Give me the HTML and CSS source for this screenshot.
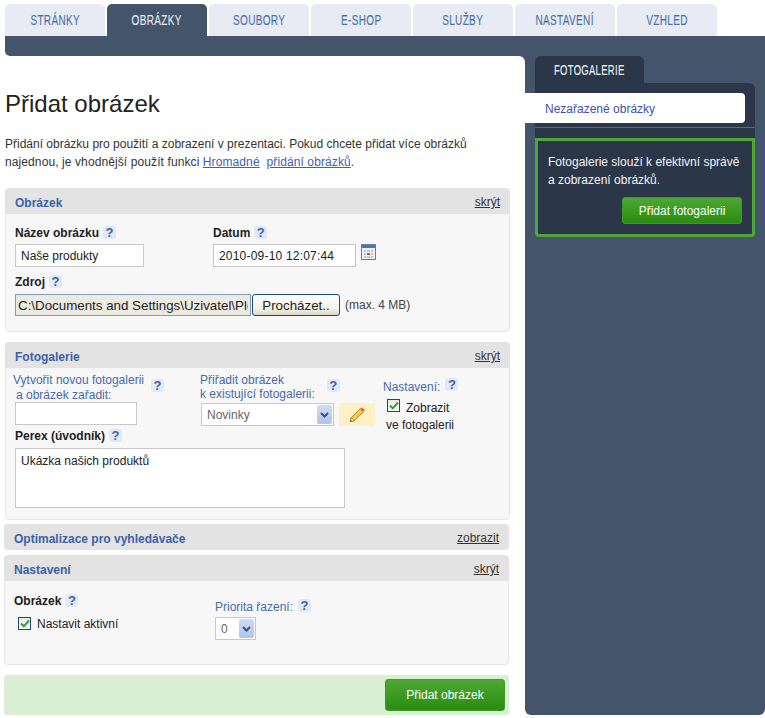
FILE: index.html
```html
<!DOCTYPE html>
<html lang="cs">
<head>
<meta charset="utf-8">
<title>Přidat obrázek</title>
<link rel="stylesheet" href="styles.css">
</head>
<body>
<nav class="tabs">
  <a class="tab"><span>STRÁNKY</span></a>
  <a class="tab active"><span>OBRÁZKY</span></a>
  <a class="tab"><span>SOUBORY</span></a>
  <a class="tab"><span>E-SHOP</span></a>
  <a class="tab"><span>SLUŽBY</span></a>
  <a class="tab"><span>NASTAVENÍ</span></a>
  <a class="tab"><span>VZHLED</span></a>
</nav>
<div class="bar"></div>
<div class="layout">
  <main class="main">
    <h1>Přidat obrázek</h1>
    <p class="intro">Přidání obrázku pro použití a zobrazení v prezentaci. Pokud chcete přidat více obrázků <span class="intro-second">najednou, je vhodnější použít funkci <a href="#">Hromadné</a>&nbsp; <a href="#">přidání obrázků</a>.</span></p>

    <section class="box">
      <header class="box-head"><h2>Obrázek</h2><a href="#" class="toggle">skrýt</a></header>
      <div class="box-body image-body">
        <div class="row">
          <div class="name-col">
            <div class="bold-label">Název obrázku<span class="help">?</span></div>
            <input class="field name-input" type="text" value="Naše produkty">
          </div>
          <div>
            <div class="bold-label">Datum<span class="help">?</span></div>
            <div class="date-row">
              <input class="field date-input" type="text" value="2010-09-10 12:07:44">
              <svg class="calendar" width="15" height="16" viewBox="0 0 15 16">
                <rect x=".5" y=".5" width="14" height="15" fill="#eef1f7" stroke="#5d7fb5"/>
                <rect x="1" y="1" width="13" height="3" fill="#4f74ad"/>
                <rect x="3" y="6" width="9" height="8" fill="#c4c4c4"/>
                <path d="M3 8.500h9M3 11.500h9M5.500 6v8M9.500 6v8" stroke="#f2f2f2"/>
                <rect x="6" y="9" width="3" height="2" fill="#c0503c"/>
              </svg>
            </div>
          </div>
        </div>
        <div class="bold-label source-label">Zdroj<span class="help">?</span></div>
        <div class="file-row">
          <input class="file-path" type="text" readonly value="C:\Documents and Settings\Uzivatel\Plocha\produkty.jpg">
          <button class="browse" type="button">Procházet..</button>
          <span class="limit">(max. 4 MB)</span>
        </div>
      </div>
    </section>

    <section class="box box-gallery">
      <header class="box-head"><h2>Fotogalerie</h2><a href="#" class="toggle">skrýt</a></header>
      <div class="box-body gallery-body">
        <div class="gallery-row">
          <div class="col-new">
            <div class="label-line">
              <div class="blue-label"><span class="first">Vytvořit novou fotogalerii</span><span class="second">a obrázek zařadit:</span></div>
              <span class="help help-new">?</span>
            </div>
            <input class="field new-input" type="text">
          </div>
          <div class="col-assign">
            <div class="label-line">
              <div class="blue-label tight">Přiřadit obrázek<br>k existující fotogalerii:</div>
              <span class="help help-assign">?</span>
            </div>
            <div class="select-row">
              <div class="select select-wide">
                <span class="select-value">Novinky</span>
                <span class="select-arrow"><svg width="9" height="6" viewBox="0 0 9 6"><path d="M1 1l3.500 3.500L8 1" fill="none" stroke="#3f5378" stroke-width="2"/></svg></span>
              </div>
              <span class="pencil">
                <svg width="16" height="16" viewBox="0 0 18 18">
                  <path d="M1.500 16.500l1-4.500L12.500 2l3.500 3.500L6 15.500z" fill="#f6c84c" stroke="#a8701f" stroke-width=".9" stroke-linejoin="round"/>
                  <path d="M12.500 2L14 .8a1 1 0 0 1 1.300 0l2 2a1 1 0 0 1 0 1.300L16 5.500z" fill="#e0703a"/>
                  <path d="M1.500 16.500l1-4.500L6 15.500z" fill="#f5dfb5" stroke="#a8701f" stroke-width=".7"/>
                  <path d="M1.500 16.500l.4-1.800 1.400 1.400z" fill="#333"/>
                </svg>
              </span>
            </div>
          </div>
          <div class="col-settings">
            <div class="settings-title"><span class="blue-text">Nastavení:</span><span class="help help-settings">?</span></div>
            <div class="check-line">
              <span class="check"><svg width="10" height="9" viewBox="0 0 10 9"><path d="M1 4.500l2.800 2.800L9 1.500" fill="none" stroke="#2ba02b" stroke-width="2"/></svg></span>
              <span class="check-text">Zobrazit</span>
            </div>
            <div class="check-second">ve fotogalerii</div>
          </div>
        </div>
        <div class="bold-label perex-label">Perex (úvodník)<span class="help">?</span></div>
        <textarea class="field perex" rows="3">Ukázka našich produktů</textarea>
      </div>
    </section>

    <section class="box box-shifted box-seo">
      <header class="box-head"><h2>Optimalizace pro vyhledávače</h2><a href="#" class="toggle">zobrazit</a></header>
    </section>

    <section class="box box-shifted box-settings">
      <header class="box-head"><h2>Nastavení</h2><a href="#" class="toggle">skrýt</a></header>
      <div class="box-body settings-body">
        <div class="settings-left">
          <div class="bold-label">Obrázek<span class="help">?</span></div>
          <div class="check-line active-line">
            <span class="check"><svg width="10" height="9" viewBox="0 0 10 9"><path d="M1 4.500l2.800 2.800L9 1.500" fill="none" stroke="#2ba02b" stroke-width="2"/></svg></span>
            <span class="active-text">Nastavit aktivní</span>
          </div>
        </div>
        <div class="priority">
          <div class="priority-label"><span class="blue-text">Priorita řazení:</span><span class="help">?</span></div>
          <div class="select select-small">
            <span class="select-value">0</span>
            <span class="select-arrow"><svg width="9" height="6" viewBox="0 0 9 6"><path d="M1 1l3.500 3.500L8 1" fill="none" stroke="#3f5378" stroke-width="2"/></svg></span>
          </div>
        </div>
      </div>
    </section>

    <div class="submit-bar"><button class="green-btn submit-btn" type="button">Přidat obrázek</button></div>
  </main>

  <aside class="side">
    <div class="side-tab"><span>FOTOGALERIE</span></div>
    <div class="side-panel">
      <a class="side-item">Nezařazené obrázky</a>
      <div class="side-rule"></div>
    </div>
    <div class="side-info">
      <p>Fotogalerie slouží k efektivní správě a&nbsp;zobrazení obrázků.</p>
      <button class="green-btn side-btn" type="button">Přidat fotogalerii</button>
    </div>
  </aside>
</div>
</body>
</html>
```

FILE: styles.css
```css
* { box-sizing: border-box; }

html, body { margin: 0; padding: 0; background: #fff; }

body {
  font: 12px/18px "Liberation Sans", Arial, sans-serif;
  color: #333;
  height: 718px;
  overflow: hidden;
}

a { color: #3f62ad; }

/* top navigation */
.tabs {
  display: flex;
  gap: 2px;
  padding: 4px 0 0 5px;
}

.tab {
  width: 100px;
  height: 32px;
  text-align: center;
  background: #e8ebf3;
  color: #4a70a8;
  border-radius: 5px 5px 0 0;
  font: 15px/32px "Liberation Sans", sans-serif;
  letter-spacing: .5px;
}

.tab span,
.side-tab span {
  display: inline-block;
  transform: scaleX(.667);
  -webkit-text-stroke: .12px currentColor;
}

.tab.active {
  background: #44546b;
  color: #e6ebf2;
}

.bar {
  height: 20px;
  margin-left: 5px;
  background: #44546b;
  border-bottom-left-radius: 5px;
}

/* page columns */
.layout {
  display: flex;
  margin-left: 5px;
  height: 659px;
  background: linear-gradient(#44546b, #44546b) 514px 0 / 6px 6px no-repeat;
}

.main {
  width: 520px;
  background: #fff;
  border-top-right-radius: 6px;
}

h1 {
  margin: 33px 0 16px;
  font-size: 24px;
  line-height: 30px;
  font-weight: normal;
  color: #222;
}

.intro {
  margin: 0 40px 17px 0;
  color: #333;
}

.intro-second { letter-spacing: .1px; }

/* section boxes */
.box {
  width: 505px;
  border-radius: 4px;
  overflow: hidden;
}

.box-gallery { margin-top: 10px; }
.box-seo { margin-top: 4px; }
.box-settings { margin-top: 5px; }
.box-shifted { margin-left: -1px; }

.box-head {
  display: flex;
  justify-content: space-between;
  align-items: center;
  height: 26px;
  padding: 2px 10px 0;
  background: #e3e3e3;
}

.box-head h2 {
  margin: 1px 0 0;
  font-size: 12px;
  font-weight: bold;
  color: #3a62a8;
}

.toggle { color: #333; }

.box-body {
  background: #f7f7f7;
  border: 1px solid #e6e6e6;
  border-top: 0;
  border-radius: 0 0 4px 4px;
}

.image-body { height: 118px; padding: 10px 9px 0; }
.gallery-body { height: 152px; padding: 5px 9px 0 7px; }
.settings-body { display: flex; height: 84px; padding: 10px 9px 0 9px; }

/* labels and helpers */
.bold-label {
  font-weight: bold;
  color: #222;
  height: 18px;
  line-height: 18px;
}

.help {
  display: inline-block;
  width: 13px;
  height: 13px;
  margin-left: 4px;
  border-radius: 3px;
  background: #e3e9f4;
  color: #3a62a8;
  font: bold 13px/13px "Liberation Sans", sans-serif;
  text-align: center;
  vertical-align: 0;
}

.blue-label, .blue-text { color: #4a6aa8; }
.blue-label { line-height: 15px; }
.blue-label.tight { line-height: 14px; }

.first, .second { display: block; white-space: nowrap; }
.second { margin-left: 3px; }

.row { display: flex; }
.name-col { width: 198px; }

/* form fields */
.field {
  display: block;
  border: 1px solid #c8c8c8;
  background: #fff;
  font: 12px "Liberation Sans", sans-serif;
  color: #222;
  padding: 0 5px;
  border-radius: 0;
  outline: 0;
}

.name-input { width: 129px; height: 23px; margin-top: 2px; }
.date-row { display: flex; align-items: flex-start; margin-top: 2px; gap: 5px; }
.date-input { width: 143px; height: 23px; letter-spacing: .2px; }
.calendar { display: block; }

.source-label { margin-top: 6px; }

.file-row {
  display: flex;
  align-items: center;
  height: 22px;
  margin-top: 3px;
}

.file-path {
  width: 236px;
  height: 22px;
  border: 1px solid #7f9db9;
  background: #ecebe2;
  padding: 0 2px;
  font: 13.330px "Liberation Sans", sans-serif;
  color: #222;
  outline: 0;
}

.browse {
  width: 88px;
  height: 22px;
  margin-left: 1px;
  padding: 0;
  border: 1px solid #1f4a73;
  border-radius: 3px;
  background: linear-gradient(#fff, #f2f0e6 70%, #dcd8c8);
  font: 13.330px "Liberation Sans", sans-serif;
  color: #222;
}

.limit { margin-left: 5px; color: #444; }

/* gallery section */
.gallery-row { display: flex; height: 51px; }
.col-new { width: 187px; }
.col-assign { width: 183px; }
.label-line { display: flex; align-items: flex-start; }
.help-new { margin: 6px 0 0 7px; flex: none; }
.help-assign { margin: 6px 0 0 12px; flex: none; }
.new-input { width: 122px; height: 23px; margin: -1px 0 0 2px; }

.select-row { display: flex; margin: 2px 0 0 1px; gap: 5px; }

.select {
  display: flex;
  justify-content: space-between;
  align-items: center;
  height: 23px;
  padding: 0 1px 0 5px;
  border: 1px solid #c8c8c8;
  background: #fff;
}

.select-wide { width: 133px; }
.select-small { width: 41px; }
.select-value { color: #666; }

.select-arrow {
  display: flex;
  align-items: center;
  justify-content: center;
  width: 15px;
  height: 19px;
  border-radius: 2px;
  background: linear-gradient(#cfdcf5, #aec4ec);
}

.pencil {
  display: flex;
  align-items: center;
  justify-content: center;
  width: 36px;
  height: 23px;
  background: #fdf1c5;
}

.settings-title { margin-top: 5px; line-height: 18px; }
.help-settings { margin-left: 5px; vertical-align: 2px; }
.col-settings { color: #222; }

.check-line { display: flex; align-items: center; }

.check {
  display: flex;
  align-items: center;
  justify-content: center;
  width: 13px;
  height: 13px;
  border: 1px solid #1c4a72;
  background: linear-gradient(#eceadf, #fff);
  flex: none;
}

.col-settings .check-line { margin: 3px 0 0 4px; gap: 6px; height: 13px; align-items: flex-start; }
.check-text { margin-top: 0; }
.check-second { margin: 4px 0 0 3px; }

.perex-label { margin: 3px 0 0 2px; }
.perex {
  width: 330px;
  height: 60px;
  margin: 3px 0 0 2px;
  padding: 3px 5px;
  line-height: 18px;
  resize: none;
}

/* settings section */
.settings-left { width: 201px; }
.settings-left .bold-label { margin-top: 1px; }
.active-line { margin: 6px 0 0 4px; gap: 6px; color: #222; height: 14px; }
.active-text { margin-top: 1px; }
.priority { margin-top: 7px; }
.priority-label { height: 18px; line-height: 18px; }
.priority-label .help { margin-left: 5px; vertical-align: 1px; }
.priority .select-small { margin-top: 1px; }

/* green action */
.submit-bar {
  display: flex;
  justify-content: flex-end;
  align-items: center;
  width: 505px;
  height: 40px;
  margin: 10px 0 0 -1px;
  padding-right: 4px;
  background: #d9eed2;
  border-radius: 3px;
}

.green-btn {
  padding: 0;
  border: 1px solid #3f9a27;
  border-radius: 3px;
  background: linear-gradient(#4da835, #2a8c10);
  color: #fff;
  font: 12px "Liberation Sans", sans-serif;
}

.submit-btn { width: 120px; height: 32px; }

/* right column */
.side {
  width: 240px;
  padding: 0 10px;
  background: #44546b;
  border-radius: 0 0 6px 6px;
}

.side-tab {
  width: 109px;
  height: 27px;
  padding-left: 19px;
  background: #2b3648;
  border-radius: 6px 6px 0 0;
  color: #eef1f5;
  font: 15px/27px "Liberation Sans", sans-serif;
  letter-spacing: .5px;
}

.side-tab span {
  transform: scaleX(.63);
  transform-origin: left center;
}

.side-panel {
  height: 55px;
  padding-top: 10px;
  background: #2b3648;
  border-top-right-radius: 6px;
}

.side-item {
  display: block;
  width: 220px;
  height: 30px;
  margin-left: -10px;
  padding: 3px 0 0 20px;
  background: #fff;
  border-radius: 0 4px 4px 0;
  color: #3f51a5;
  line-height: 27px;
}

.side-rule {
  height: 1px;
  margin-top: 4px;
  background: #5d6a7e;
}

.side-info {
  height: 99px;
  padding: 12px 10px 0;
  background: #2b3648;
  border: 3px solid #4ea732;
  border-radius: 0 0 4px 4px;
  color: #f2f4f7;
  display: flex;
  flex-direction: column;
}

.side-info p { margin: 0 0 8px; }

.side-btn {
  align-self: flex-end;
  width: 120px;
  height: 27px;
}
```
